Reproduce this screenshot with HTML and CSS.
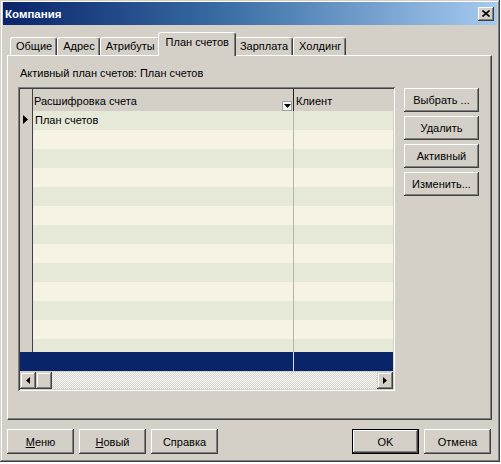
FILE: index.html
```html
<!DOCTYPE html>
<html>
<head>
<meta charset="utf-8">
<title>Компания</title>
<link rel="stylesheet" href="styles.css">
</head>
<body>
<div class="window">
  <div class="titlebar">
    <span class="title">Компания</span>
    <span class="close"><svg width="8" height="7" viewBox="0 0 8 7"><path d="M0.5 0.5 L7.5 6.5 M7.5 0.5 L0.5 6.5" stroke="#000" stroke-width="1.6" fill="none"/></svg></span>
  </div>
  <div class="tabs">
    <div class="tab">Общие</div>
    <div class="tab">Адрес</div>
    <div class="tab">Атрибуты</div>
    <div class="tab active">План счетов</div>
    <div class="tab">Зарплата</div>
    <div class="tab">Холдинг</div>
  </div>
  <div class="panel">
    <div class="caption">Активный план счетов: План счетов</div>
    <div class="content">
      <div class="grid">
        <div class="grid-head">
          <div class="ind"></div>
          <div class="c1">Расшифровка счета<span class="dd"><svg width="7" height="4" viewBox="0 0 7 4"><path d="M0 0 H7 L3.5 4 Z" fill="#000"/></svg></span></div>
          <div class="c2">Клиент</div>
        </div>
        <div class="rows">
          <div class="row odd"><div class="ind"><svg width="5" height="9" viewBox="0 0 5 9"><path d="M0 0 L5 4.5 L0 9 Z" fill="#000"/></svg></div><div class="c1">План счетов</div><div class="c2"></div></div>
          <div class="row even"><div class="ind"></div><div class="c1"></div><div class="c2"></div></div>
          <div class="row odd"><div class="ind"></div><div class="c1"></div><div class="c2"></div></div>
          <div class="row even"><div class="ind"></div><div class="c1"></div><div class="c2"></div></div>
          <div class="row odd"><div class="ind"></div><div class="c1"></div><div class="c2"></div></div>
          <div class="row even"><div class="ind"></div><div class="c1"></div><div class="c2"></div></div>
          <div class="row odd"><div class="ind"></div><div class="c1"></div><div class="c2"></div></div>
          <div class="row even"><div class="ind"></div><div class="c1"></div><div class="c2"></div></div>
          <div class="row odd"><div class="ind"></div><div class="c1"></div><div class="c2"></div></div>
          <div class="row even"><div class="ind"></div><div class="c1"></div><div class="c2"></div></div>
          <div class="row odd"><div class="ind"></div><div class="c1"></div><div class="c2"></div></div>
          <div class="row even"><div class="ind"></div><div class="c1"></div><div class="c2"></div></div>
          <div class="row odd"><div class="ind"></div><div class="c1"></div><div class="c2"></div></div>
        </div>
        <div class="row selected"><div class="ind"></div><div class="c1"></div><div class="c2"></div></div>
        <div class="hscroll">
          <span class="sb-btn"><svg width="4" height="7" viewBox="0 0 4 7"><path d="M4 0 L0 3.5 L4 7 Z" fill="#000"/></svg></span>
          <span class="sb-btn thumb"></span>
          <span class="track"></span>
          <span class="sb-btn"><svg width="4" height="7" viewBox="0 0 4 7"><path d="M0 0 L4 3.5 L0 7 Z" fill="#000"/></svg></span>
        </div>
      </div>
      <div class="side">
        <button class="btn side-btn">Выбрать ...</button>
        <button class="btn side-btn">Удалить</button>
        <button class="btn side-btn">Активный</button>
        <button class="btn side-btn">Изменить...</button>
      </div>
    </div>
  </div>
  <div class="footer">
    <button class="btn foot-btn"><u>М</u>еню</button>
    <button class="btn foot-btn"><u>Н</u>овый</button>
    <button class="btn foot-btn">Справка</button>
    <span class="spacer"></span>
    <button class="btn foot-btn default">OK</button>
    <button class="btn foot-btn">Отмена</button>
  </div>
</div>
</body>
</html>
```

FILE: styles.css
```css
* { box-sizing: border-box; }
html, body { margin: 0; padding: 0; background: #ffffff; }
body {
  font-family: "Liberation Sans", Arial, sans-serif;
  font-size: 11px;
  color: #000;
}
.window {
  width: 500px;
  height: 462px;
  background: #d4d0c8;
  padding: 2px 3px 3px 3px;
  display: flex;
  flex-direction: column;
  box-shadow: inset -1px -1px #404040, inset 1px 1px #d4d0c8, inset -2px -2px #808080, inset 2px 2px #ffffff;
}
.titlebar {
  height: 23px;
  flex: none;
  display: flex;
  align-items: center;
  padding: 0 3px 0 2px;
  background: linear-gradient(90deg, #0a246a 0%, #3a6ea5 45%, #a6caf0 100%);
}
.title {
  color: #fff;
  font-weight: bold;
  font-size: 11.5px;
}
.close {
  margin-left: auto;
  width: 16px;
  height: 14px;
  background: #d4d0c8;
  display: flex;
  align-items: center;
  justify-content: center;
  box-shadow: inset -1px -1px #404040, inset 1px 1px #ffffff, inset -2px -2px #808080;
}
.tabs {
  margin-top: 7px;
  height: 23px;
  flex: none;
  display: flex;
  align-items: flex-end;
  padding-left: 7px;
  position: relative;
  z-index: 2;
}
.tab {
  height: 18px;
  padding: 2px 4px 0 5px;
  line-height: 13px;
  border-top: 1px solid #fff;
  border-left: 1px solid #fff;
  border-right: 1px solid #404040;
  border-radius: 3px 3px 0 0;
  box-shadow: inset -1px 0 #808080;
  white-space: nowrap;
  background: #d4d0c8;
}
.tab.active {
  height: 24px;
  margin: 0 -2px -1px -2px;
  padding: 3px 6px 0 7px;
  position: relative;
  z-index: 3;
}
.panel {
  margin-left: 4px;
  width: 485px;
  height: 365px;
  flex: none;
  border-top: 1px solid #fff;
  border-left: 1px solid #fff;
  border-right: 1px solid #404040;
  border-bottom: 1px solid #404040;
  box-shadow: inset -1px -1px #808080;
  padding: 11px 0 0 10px;
}
.caption {
  margin-left: 2px;
  line-height: 13px;
  height: 13px;
  margin-bottom: 7px;
}
.content {
  display: flex;
  align-items: flex-start;
  gap: 9px;
}
.grid {
  width: 377px;
  height: 304px;
  padding: 2px;
  display: flex;
  flex-direction: column;
  background: #d4d0c8;
  box-shadow: inset 1px 1px #808080, inset -1px -1px #ffffff, inset 2px 2px #404040, inset -2px -2px #d4d0c8;
}
.grid-head {
  height: 22px;
  flex: none;
  display: flex;
  background: #d4d0c8;
}
.grid-head .ind {
  width: 13px;
  border-right: 1px solid #404040;
}
.grid-head .c1 {
  width: 261px;
  border-right: 1px solid #202020;
  display: flex;
  align-items: center;
  padding: 2px 0 0 1px;
}
.grid-head .c2 {
  flex: 1;
  display: flex;
  align-items: center;
  padding: 2px 0 0 2px;
}
.dd {
  margin-left: auto;
  margin-right: 1px;
  margin-top: 9px;
  width: 10px;
  height: 10px;
  background: #f4f4f0;
  border: 1px solid #a0a0a0;
  display: flex;
  align-items: center;
  justify-content: center;
}
.rows {
  height: 241px;
  flex: none;
  overflow: hidden;
}
.row {
  height: 19px;
  flex: none;
  display: flex;
}
.row .ind {
  width: 13px;
  background: #d4d0c8;
  border-right: 1px solid #404040;
  display: flex;
  align-items: center;
  padding-left: 3px;
  padding-bottom: 3px;
}
.row .c1 {
  width: 261px;
  border-right: 1px solid #b4b4a8;
  padding-left: 2px;
  line-height: 19px;
}
.row .c2 { flex: 1; }
.row.odd .c1, .row.odd .c2 { background: #e6e8d8; }
.row.even .c1, .row.even .c2 { background: #f6f3e4; }
.row.selected { background: #0a246a; }
.row.selected .ind { background: #0a246a; border-right: none; }
.row.selected .c1 { border-right: 1px solid #d8d8e8; }
.hscroll {
  margin-top: 1px;
  height: 17px;
  flex: none;
  display: flex;
  background: #fff;
}
.sb-btn {
  width: 16px;
  height: 17px;
  flex: none;
  background: #d4d0c8;
  display: flex;
  align-items: center;
  justify-content: center;
  box-shadow: inset -1px -1px #404040, inset 1px 1px #d4d0c8, inset -2px -2px #808080, inset 2px 2px #ffffff;
}
.track {
  flex: 1;
  background: repeating-conic-gradient(#d4d0c8 0 25%, #ffffff 0 50%) 0 0 / 2px 2px;
}
.btn {
  font-family: "Liberation Sans", Arial, sans-serif;
  font-size: 11px;
  color: #000;
  background: #d4d0c8;
  border: none;
  padding: 0;
  margin: 0;
  box-shadow: inset -1px -1px #404040, inset 1px 1px #ffffff, inset -2px -2px #808080, inset 2px 2px #d4d0c8;
}
.side {
  display: flex;
  flex-direction: column;
  gap: 4px;
  margin-top: 1px;
}
.side-btn {
  width: 75px;
  height: 24px;
}
.footer {
  margin-top: 9px;
  display: flex;
  gap: 5px;
  padding: 0 6px 0 4px;
}
.foot-btn {
  width: 67px;
  height: 25px;
}
.foot-btn u { text-decoration: underline; }
.spacer { flex: 1; }
.foot-btn.default {
  box-shadow: inset 0 0 0 1px #000, inset -2px -2px #404040, inset 2px 2px #ffffff, inset -3px -3px #808080;
}
```
